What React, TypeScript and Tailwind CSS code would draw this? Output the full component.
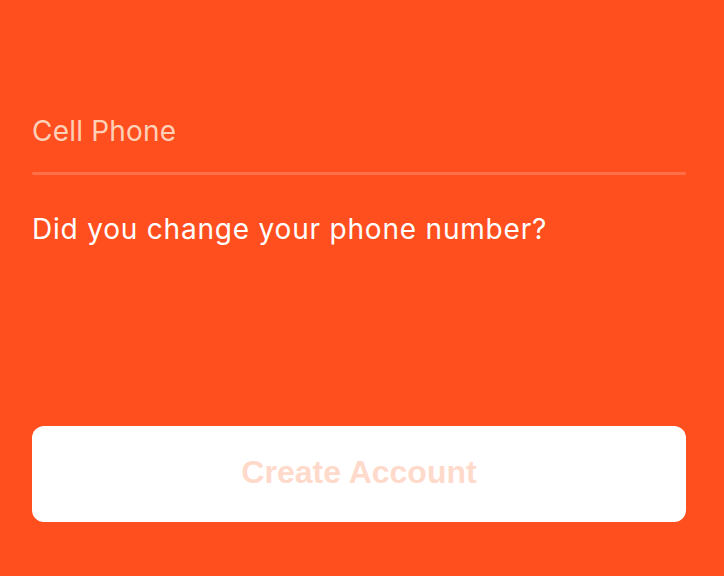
import React from 'react';

export default function App() {
  return (
    <div className="w-[724px] h-[576px] bg-[#ff4f1f] pl-8 pr-[38px] pt-[108px] font-['Inter',sans-serif] overflow-hidden">
      <label className="block">
        <input
          type="tel"
          placeholder="Cell Phone"
          className="w-full bg-transparent text-[28px] leading-[46px] tracking-[0.2px] text-white placeholder:text-[#ffd0b8] outline-none"
        />
        <div className="mt-[18px] h-[3px] rounded-full bg-[#ff7048]" />
      </label>
      <p className="mt-[34px] text-[28px] leading-[40px] tracking-[0.8px] text-white">Did you change your phone number?</p>
      <button className="mt-[177px] w-full h-[96px] rounded-[12px] bg-white pb-1 font-['Liberation_Sans',sans-serif] text-[32px] font-bold text-[#ffdacb]">
        Create Account
      </button>
    </div>
  );
}
